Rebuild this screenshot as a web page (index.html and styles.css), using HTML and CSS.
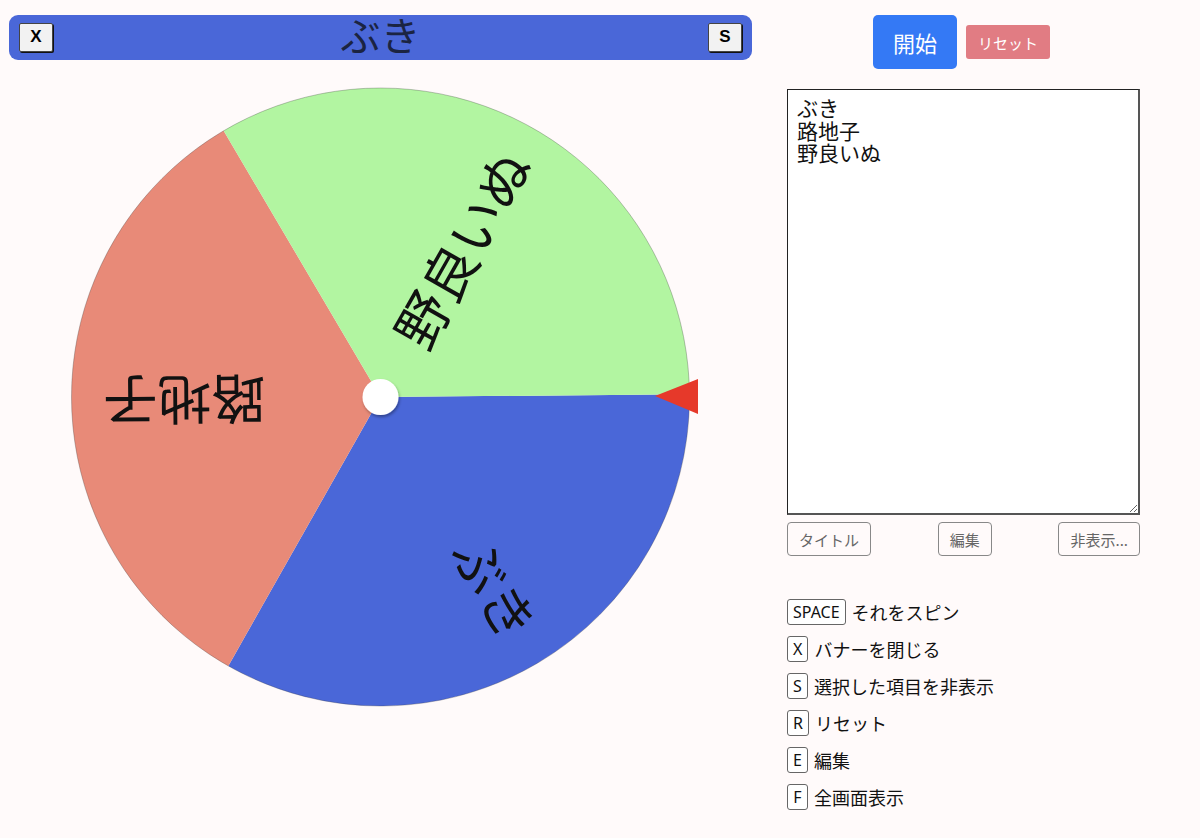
FILE: index.html
```html
<!DOCTYPE html>
<html lang="ja">
<head>
<meta charset="utf-8">
<title>ルーレット</title>
<link rel="stylesheet" href="styles.css">
</head>
<body>
<div class="page">
  <div class="left">
    <div class="banner">
      <button class="bkey">X</button>
      <div class="btitle">ぶき</div>
      <button class="bkey">S</button>
    </div>
    <svg class="wheel" width="760" height="720" viewBox="0 0 760 720">
      <defs>
        <filter id="sh" x="-50%" y="-50%" width="200%" height="200%">
          <feDropShadow dx="1" dy="2" stdDeviation="1.5" flood-color="#000" flood-opacity="0.35"/>
        </filter>
      </defs>
      <path class="seg-blue" d="M380.5 327 L689.49 324.30 A309 309 0 0 1 228.34 595.94 Z"/>
      <path class="seg-red" d="M380.5 327 L228.34 595.94 A309 309 0 0 1 223.67 60.76 Z"/>
      <path class="seg-green" d="M380.5 327 L223.67 60.76 A309 309 0 0 1 689.49 324.30 Z"/>
      <circle class="rim" cx="380.5" cy="327" r="309"/>
      <text class="wtext" transform="translate(380.5 327) rotate(59.5)" x="277" y="-4" text-anchor="end" dominant-baseline="central">ぶき</text>
      <text class="wtext" transform="translate(380.5 327) rotate(179.5)" x="277" y="-4" text-anchor="end" dominant-baseline="central">路地子</text>
      <text class="wtext" transform="translate(380.5 327) rotate(299.5)" x="277" y="-4" text-anchor="end" dominant-baseline="central">野良いぬ</text>
      <circle class="hub" cx="380.5" cy="327" r="18" filter="url(#sh)"/>
      <polygon class="pointer" points="655,326 698,309 698,344"/>
    </svg>
  </div>
  <div class="right">
    <div class="actions">
      <button class="start">開始</button>
      <button class="reset">リセット</button>
    </div>
    <textarea class="items">ぶき
路地子
野良いぬ</textarea>
    <div class="tools">
      <button class="tool">タイトル</button>
      <button class="tool">編集</button>
      <button class="tool">非表示...</button>
    </div>
    <ul class="keys">
      <li><kbd>SPACE</kbd><span>それをスピン</span></li>
      <li><kbd>X</kbd><span>バナーを閉じる</span></li>
      <li><kbd>S</kbd><span>選択した項目を非表示</span></li>
      <li><kbd>R</kbd><span>リセット</span></li>
      <li><kbd>E</kbd><span>編集</span></li>
      <li><kbd>F</kbd><span>全画面表示</span></li>
    </ul>
  </div>
</div>
</body>
</html>
```

FILE: styles.css
```css
html, body {
  margin: 0;
  padding: 0;
  background: #fffafa;
  font-family: "Noto Sans CJK JP", "Noto Sans", sans-serif;
  color: #111;
  overflow: hidden;
}
.page {
  display: flex;
  align-items: flex-start;
}
.left {
  width: 760px;
  padding-top: 15px;
  display: flex;
  flex-direction: column;
}
.banner {
  margin-left: 9px;
  width: 743px;
  height: 45px;
  box-sizing: border-box;
  background: #4a67d8;
  border-radius: 9px;
  display: flex;
  align-items: center;
  justify-content: space-between;
  padding: 0 10px;
}
.bkey {
  width: 34px;
  height: 29px;
  padding: 0;
  background: #f2f2f2;
  border: 1px solid #444;
  border-radius: 2px;
  box-shadow: 1px 1px 0 #111;
  font-family: "Liberation Sans", Arial, sans-serif;
  font-weight: bold;
  font-size: 17px;
  color: #000;
  margin-top: -1px;
}
.btitle {
  font-size: 40px;
  line-height: 45px;
  color: #1b2442;
  margin-top: -6px;
}
.wheel {
  display: block;
  margin-top: 10px;
}
.seg-blue { fill: #4a67d8; }
.seg-red { fill: #e88a78; }
.seg-green { fill: #b2f5a1; }
.rim { fill: none; stroke: rgba(60, 60, 60, 0.3); stroke-width: 1; }
.wtext {
  font-family: "Noto Sans CJK JP", sans-serif;
  font-size: 54px;
  fill: #111;
}
.hub { fill: #fff; }
.pointer { fill: #e6392a; }

.right {
  margin-left: 27px;
  width: 353px;
  padding-top: 15px;
  display: flex;
  flex-direction: column;
}
.actions {
  display: flex;
  justify-content: center;
  align-items: center;
  gap: 9px;
  padding-right: 4px;
}
.start {
  width: 84px;
  height: 54px;
  background: #3479f5;
  color: #fff;
  border: none;
  border-radius: 5px;
  font-family: "Noto Sans CJK JP", sans-serif;
  font-size: 22px;
  padding: 0;
}
.reset {
  width: 84px;
  height: 34px;
  background: #e17c83;
  color: #fff;
  border: none;
  border-radius: 3px;
  font-family: "Noto Sans CJK JP", sans-serif;
  font-size: 15px;
  padding: 0;
}
.items {
  margin-top: 20px;
  width: 353px;
  height: 426px;
  box-sizing: border-box;
  border: 1px solid #222;
  border-right: 2px solid #555;
  border-bottom: 2px solid #555;
  background: #fff;
  font-family: "Noto Sans CJK JP", sans-serif;
  font-size: 21px;
  line-height: 22.6px;
  color: #111;
  padding: 6px 9px;
  resize: vertical;
}
.tools {
  margin-top: 7px;
  display: flex;
  justify-content: space-between;
}
.tool {
  height: 34px;
  padding: 0 11px;
  background: transparent;
  border: 1px solid #888;
  border-radius: 4px;
  font-family: "Noto Sans CJK JP", sans-serif;
  font-size: 15px;
  color: #666;
}
.keys {
  list-style: none;
  margin: 43px 0 0 0;
  padding: 0;
  display: flex;
  flex-direction: column;
  gap: 11px;
}
.keys li {
  display: flex;
  align-items: center;
  height: 26px;
}
.keys kbd {
  box-sizing: border-box;
  height: 26px;
  min-width: 21px;
  padding: 0 5px;
  border: 1px solid #666;
  border-radius: 3px;
  font-family: "Noto Sans", sans-serif;
  font-size: 16px;
  line-height: 24px;
  text-align: center;
  color: #111;
  background: #fff;
}
.keys span {
  margin-left: 6px;
  font-size: 18px;
  color: #111;
}
```
